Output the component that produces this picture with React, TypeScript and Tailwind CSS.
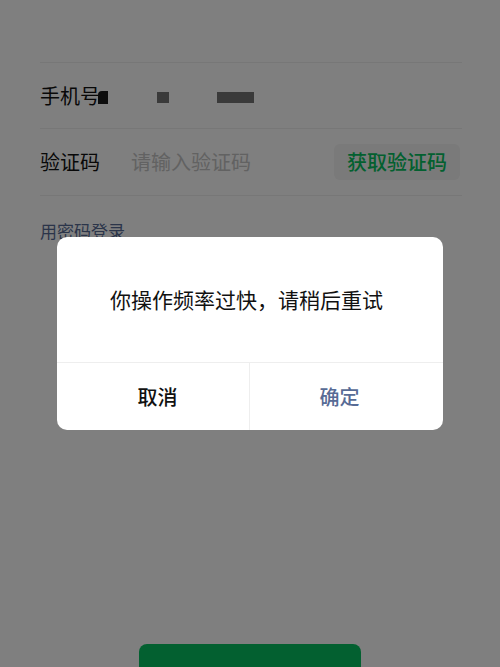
import React from 'react';

const cjk = { fontFamily: '"Noto Sans CJK SC", "Noto Sans", sans-serif' };

// 登录页 + 频率限制弹窗
export default function App() {
  return (
    <div className="relative w-[500px] h-[667px] overflow-hidden bg-white" style={cjk}>
      {/* 表单 */}
      <div className="pt-[62px] ml-10 mr-[38px]">
        <div className="h-[67px] border-t border-b border-[#eeeeee] flex items-center">
          <span className="text-[20px] leading-none text-[#111111]">手机号</span>
          <span className="ml-[-2px] mt-[3px] w-[10px] h-[13px] bg-[#1a1a1a] rounded-tl-[4px]"></span>
          <span className="ml-[49px] mt-[3px] w-[12px] h-[11px] bg-[#747474]"></span>
          <span className="ml-[48px] mt-[3px] w-[37px] h-[11px] bg-[#747474]"></span>
        </div>
        <div className="h-[67px] border-b border-[#eeeeee] flex items-center">
          <span className="w-[91px] text-[20px] leading-none text-[#111111]">验证码</span>
          <span className="flex-1 text-[20px] leading-none text-[#c4c4c4]">请输入验证码</span>
          <button className="mr-[2px] h-[36px] px-[13px] rounded-[6px] bg-[#f4f4f4] text-[20px] font-medium text-[#07c160] leading-none">
            获取验证码
          </button>
        </div>
        <div className="mt-[26px] text-[17px] leading-none text-[#576b95]">用密码登录</div>
      </div>

      <div className="flex justify-center mt-[405px]">
        <div className="w-[222px] h-[48px] rounded-[8px] bg-[#07c160]"></div>
      </div>

      {/* 遮罩与弹窗 */}
      <div className="absolute inset-0 bg-black/50 flex items-center justify-center">
        <div className="w-[386px] bg-white rounded-[10px] overflow-hidden">
          <div className="h-[125px] pr-[7px] flex items-center justify-center text-[21px] text-[#111111]">
            你操作频率过快，请稍后重试
          </div>
          <div className="h-[68px] flex border-t border-[#eeeeee]">
            <button className="w-[192px] flex items-center justify-center text-[20px] font-medium text-[#111111]">
              <span className="ml-[9px]">取消</span>
            </button>
            <div className="w-px bg-[#eeeeee]"></div>
            <button className="w-[193px] flex items-center justify-center text-[20px] font-medium text-[#576b95]">
              <span className="mr-[14px]">确定</span>
            </button>
          </div>
        </div>
      </div>
    </div>
  );
}
